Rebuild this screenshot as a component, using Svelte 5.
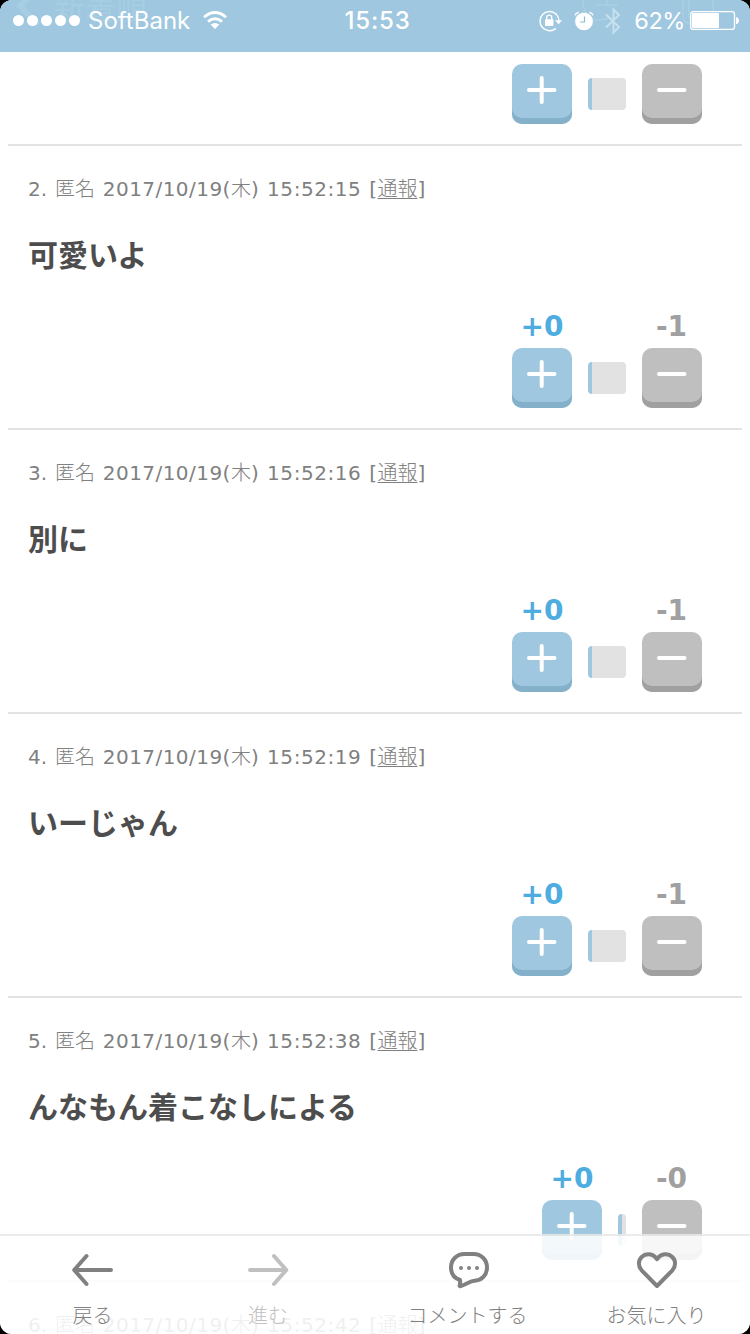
<script>
	let comments = [
		{ id: 1, time: "15:52:10", text: "", plus: 0, minus: 1 },
		{ id: 2, time: "15:52:15", text: "可愛いよ", plus: 0, minus: 1 },
		{ id: 3, time: "15:52:16", text: "別に", plus: 0, minus: 1 },
		{ id: 4, time: "15:52:19", text: "いーじゃん", plus: 0, minus: 1 },
		{ id: 5, time: "15:52:38", text: "んなもん着こなしによる", plus: 0, minus: 0 },
		{ id: 6, time: "15:52:42", text: "", plus: 0, minus: 0 },
	];

	const signal = [1, 2, 3, 4, 5];

	// 4px for an empty side, 34px for one vote
	function barWidth(votes) {
		return 4 + votes * 30;
	}
</script>

<div class="screen">
	<main class="feed">
		{#each comments as c}
			<article class="comment">
				<p class="meta">
					<span class="num">{c.id}.</span> <span class="ja">匿名</span>
					<span class="date">2017/10/19</span>(<span class="ja">木</span>)
					<span class="time">{c.time}</span> [<a href="#report" class="ja">通報</a>]
				</p>
				<p class="text">{c.text}</p>
				<div class="votes">
					<div class="vote">
						<span class="count plus">+{c.plus}</span>
						<button class="btn btn-plus" aria-label="プラス">
							<svg width="60" height="60" viewBox="0 0 60 60">
								<path d="M17 26H42.5M29.7 14V38" />
							</svg>
						</button>
					</div>
					<div class="bar">
						<span class="bar-plus" style="width: {barWidth(c.plus)}px"></span>
						<span class="bar-minus" style="width: {barWidth(c.minus)}px"></span>
					</div>
					<div class="vote">
						<span class="count minus">-{c.minus}</span>
						<button class="btn btn-minus" aria-label="マイナス">
							<svg width="60" height="60" viewBox="0 0 60 60">
								<path d="M17 26H42.5" />
							</svg>
						</button>
					</div>
				</div>
			</article>
		{/each}
	</main>

	<header class="status">
		<!-- navigation bar fading out behind the status bar -->
		<div class="nav-ghost">
			<svg width="40" height="30" viewBox="0 0 40 30">
				<path d="M33 -8L20 6L38 25" fill="none" stroke="#a6cde2" stroke-width="6" />
			</svg>
			<span class="nav-title">新着順</span>
			<svg class="nav-icons" width="170" height="30" viewBox="0 0 170 30" fill="none" stroke="#a8d0e3" stroke-width="1.5">
				<path d="M3 0C3 12 9 20 19 20Q27 20 30 15M15 5H38M27 0V5" />
				<path d="M103 0V16Q103 23 110 23H118M109 0V16Q109 20 113 20H127Q133 20 133 14V0" />
			</svg>
		</div>

		<div class="status-row">
			<div class="left">
				<div class="dots">
					{#each signal as s}<i></i>{/each}
				</div>
				<span class="carrier">SoftBank</span>
				<svg class="wifi" width="24" height="19" viewBox="0 0 24 19">
					<path d="M1 6.2Q12 -3.2 23 6.2" />
					<path d="M5 10.6Q12 5 19 10.6" />
					<path class="fill" d="M7.6 13.6Q12 10.4 16.4 13.6L12 18Z" />
				</svg>
			</div>
			<span class="clock">15:53</span>
			<div class="right">
				<svg class="lock" width="24" height="24" viewBox="0 0 24 24">
					<path d="M18.6 5.6A9.6 9.6 0 1 0 17.9 19.4M18.6 5.6Q21 8.4 21 12" fill="none" stroke="#fff" stroke-width="1.4" />
					<path d="M17 11.2H24L20.5 15.2Z" fill="#fff" />
					<rect x="7" y="10.3" width="8.4" height="6.6" rx="0.6" fill="#fff" />
					<path d="M8.7 11V8.6A2.5 2.5 0 0 1 13.7 8.6V11" fill="none" stroke="#fff" stroke-width="1.4" />
				</svg>
				<svg class="alarm" width="20" height="20" viewBox="0 0 20 20">
					<circle cx="10" cy="10.4" r="8.9" fill="#fff" />
					<path d="M1 4.4Q1.6 2 4.6 1.2M15.4 1.2Q18.4 2 19 4.4" fill="none" stroke="#fff" stroke-width="1.4" />
					<path d="M10.5 5.4V11H6" fill="none" stroke="#8fbad4" stroke-width="1.2" />
				</svg>
				<svg class="bluetooth" width="18" height="28" viewBox="0 0 18 28">
					<path d="M2 7.5L15 20L9.5 25.5V2.5L15 8L2 20.5" fill="none" stroke="#c7e0ee" stroke-width="2" />
				</svg>
				<span class="percent">62%</span>
				<svg class="battery" width="50" height="19" viewBox="0 0 50 19">
					<rect x="0.7" y="0.7" width="43.8" height="17.8" rx="2.6" fill="none" stroke="#fff" stroke-width="1.3" />
					<rect x="2" y="2" width="27" height="15" rx="1" fill="#fff" />
					<path d="M46 6Q49 6.6 49 9.6T46 13.2Z" fill="#fff" />
				</svg>
			</div>
		</div>
	</header>

	<nav class="toolbar">
		<button class="tool">
			<svg width="44" height="40" viewBox="0 0 44 40">
				<path d="M40 20H4M15.5 6L3.2 20L15.5 34" />
			</svg>
			<span>戻る</span>
		</button>
		<button class="tool disabled">
			<svg width="44" height="40" viewBox="0 0 44 40">
				<path d="M3 20H39M27 6L39.3 20L27 34" />
			</svg>
			<span>進む</span>
		</button>
		<button class="tool">
			<svg width="44" height="40" viewBox="0 0 44 40">
				<path d="M18.5 4H27.5C35 4 41 9.5 41 17.3C41 25.3 35.5 30.6 28.5 30.8C24 31 20.5 34.5 14.6 36.2C13.8 36.4 13.4 35.8 13.7 35.1C14.3 33.6 14.2 31.5 14 30C8.2 28.2 5 23.5 5 17.3C5 9.5 11 4 18.5 4Z" />
				<g class="fill">
					<circle cx="15" cy="18" r="2" />
					<circle cx="23" cy="18" r="2" />
					<circle cx="31" cy="18" r="2" />
				</g>
			</svg>
			<span>コメントする</span>
		</button>
		<button class="tool">
			<svg width="44" height="40" viewBox="0 0 44 40">
				<path d="M22 36L6.6 20.3C3 16.2 3 10.6 6.7 7C10.8 3 18 3 22 9.2C26 3 33.2 3 37.3 7C41 10.6 41 16.2 37.4 20.3Z" />
			</svg>
			<span>お気に入り</span>
		</button>
	</nav>
</div>

<style>
	:global(body) {
		margin: 0;
		background: #000;
	}

	.screen {
		position: relative;
		width: 750px;
		height: 1334px;
		overflow: hidden;
		background: #fff;
		border-radius: 12px;
		font-family: "DejaVu Sans", "Noto Sans CJK JP", sans-serif;
	}

	button {
		border: none;
		padding: 0;
		background: none;
		font-family: inherit;
		cursor: pointer;
	}

	/* list is scrolled down past the first comment */
	.feed {
		margin: 0 8px;
		margin-top: -138px;
	}

	.comment {
		box-sizing: border-box;
		height: 284px;
		padding: 27px 40px 20px 20px;
		border-bottom: 2px solid #e3e3e3;
		display: flex;
		flex-direction: column;
	}

	.meta {
		margin: 0;
		height: 30px;
		line-height: 30px;
		font-size: 20px;
		letter-spacing: 0.5px;
		word-spacing: 1px;
		color: #808080;
		white-space: nowrap;
	}
	.num {
		letter-spacing: 0;
	}
	.ja {
		font-family: "Noto Sans CJK JP", sans-serif;
		font-weight: 300;
		letter-spacing: 0;
		color: inherit;
	}
	.meta a {
		text-decoration: underline;
		text-decoration-thickness: 1px;
		text-underline-offset: 2px;
	}
	.date {
		letter-spacing: 0.45px;
	}
	.time {
		letter-spacing: 0.55px;
	}

	.text {
		margin: 28px 0 0 0;
		height: 44px;
		line-height: 44px;
		font-family: "Noto Sans CJK JP", sans-serif;
		font-size: 30px;
		font-weight: 700;
		color: #4d4d4d;
	}

	.votes {
		margin-top: auto;
		display: flex;
		justify-content: flex-end;
		align-items: flex-end;
		gap: 16px;
	}
	.vote {
		width: 60px;
		display: flex;
		flex-direction: column;
		align-items: center;
	}
	.count {
		height: 30px;
		line-height: 30px;
		margin-bottom: 6px;
		font-size: 28px;
		font-weight: 700;
	}
	.plus {
		color: #4dace0;
	}
	.minus {
		margin-right: 1px;
		color: #a0a0a0;
	}

	.btn {
		width: 60px;
		height: 60px;
		border-radius: 10px;
	}
	.btn svg {
		display: block;
		fill: none;
		stroke: #fff;
		stroke-width: 4;
		stroke-linecap: round;
	}
	.btn-plus {
		background: #9fc7df;
		box-shadow: inset 0 -6px 0 #84b0ca;
	}
	.btn-minus {
		background: #bfbfbf;
		box-shadow: inset 0 -6px 0 #a0a0a0;
	}

	.bar {
		display: flex;
		height: 32px;
		margin-bottom: 14px;
		border-radius: 4px;
		overflow: hidden;
	}
	.bar-plus {
		background: #9fc7df;
	}
	.bar-minus {
		background: #e2e2e2;
	}

	.status {
		position: absolute;
		top: 0;
		left: 0;
		width: 750px;
		height: 52px;
		overflow: hidden;
		background: #9fc7df;
		color: #fff;
		font-family: Inter, sans-serif;
	}
	.nav-ghost {
		position: absolute;
		top: 0;
		left: 0;
		width: 750px;
		display: flex;
	}
	.nav-title {
		margin: -12px 0 0 14px;
		height: 30px;
		line-height: 36px;
		font-family: "Noto Sans CJK JP", sans-serif;
		font-size: 31px;
		color: #a6cde2;
	}
	.nav-icons {
		margin-left: auto;
	}

	.status-row {
		position: relative;
		height: 41px;
		display: grid;
		grid-template-columns: 1fr auto 1fr;
		align-items: center;
		padding: 0 10px 0 13px;
	}
	.left,
	.right,
	.dots {
		display: flex;
		align-items: center;
	}
	.right {
		justify-content: flex-end;
	}
	.dots {
		gap: 3px;
	}
	.dots i {
		width: 11px;
		height: 11px;
		border-radius: 50%;
		background: #fff;
	}
	.carrier {
		margin-left: 8px;
		font-size: 24px;
	}
	.wifi {
		margin-left: 13px;
		fill: none;
		stroke: #fff;
		stroke-width: 2.8;
	}
	.wifi .fill {
		fill: #fff;
		stroke: none;
	}
	.clock {
		margin-left: 2px;
		font-size: 24px;
		font-weight: 500;
		letter-spacing: 0.8px;
	}
	.alarm {
		margin-left: 12px;
	}
	.bluetooth {
		margin-left: 10px;
	}
	.percent {
		margin-left: 12px;
		font-size: 23.5px;
		letter-spacing: -0.4px;
	}
	.battery {
		margin-left: 5px;
	}

	.toolbar {
		position: absolute;
		left: 0;
		bottom: 0;
		box-sizing: border-box;
		width: 750px;
		height: 100px;
		display: grid;
		grid-template-columns: 186px 165px 234px 144px;
		border-top: 2px solid rgba(232, 232, 232, 0.88);
		background: rgba(255, 255, 255, 0.88);
		background-clip: padding-box;
	}
	.tool {
		display: flex;
		flex-direction: column;
		align-items: center;
		justify-content: flex-start;
		padding-top: 14px;
		color: #808080;
		font-family: "Noto Sans CJK JP", sans-serif;
		font-size: 20px;
		font-weight: 300;
	}
	.tool svg {
		fill: none;
		stroke: currentColor;
		stroke-width: 4;
		stroke-linecap: round;
		stroke-linejoin: round;
	}
	.tool .fill {
		fill: currentColor;
		stroke: none;
	}
	.tool span {
		height: 30px;
		line-height: 30px;
		margin-top: 10px;
		margin-right: 1px;
		white-space: nowrap;
	}
	.disabled {
		color: #c0c0c0;
	}
</style>
